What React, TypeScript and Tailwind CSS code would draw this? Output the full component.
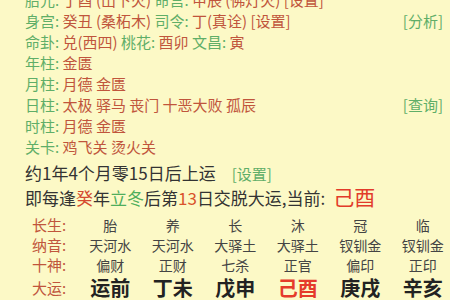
const font = { fontFamily: '"Noto Sans CJK SC", "Noto Sans", sans-serif' };

const G = "text-[#5fae68]";
const R = "text-[#c0553c]";

type Seg = [string, string];

const infoLines: { segs: Seg[]; right?: string }[] = [
  { segs: [["胎元: ", G], ["丁酉 (山下火) ", R], ["命宫: ", G], ["甲辰 (佛灯火) [设置]", R]] },
  { segs: [["身宫: ", G], ["癸丑 (桑柘木) ", R], ["司令: ", G], ["丁(真诠) [设置]", R]], right: "[分析]" },
  { segs: [["命卦: ", G], ["兑(西四) ", R], ["桃花: ", G], ["酉卯 ", R], ["文昌: ", G], ["寅", R]] },
  { segs: [["年柱: ", G], ["金匮", R]] },
  { segs: [["月柱: ", G], ["月德 金匮", R]] },
  { segs: [["日柱: ", G], ["太极 驿马 丧门 十恶大败 孤辰", R]], right: "[查询]" },
  { segs: [["时柱: ", G], ["月德 金匮", R]] },
  { segs: [["关卡: ", G], ["鸡飞关 烫火关", R]] },
];

const rows = [
  { label: "长生", cells: ["胎", "养", "长", "沐", "冠", "临"] },
  { label: "纳音", cells: ["天河水", "天河水", "大驿土", "大驿土", "钗钏金", "钗钏金"] },
  { label: "十神", cells: ["偏财", "正财", "七杀", "正官", "偏印", "正印"] },
];

const dayun = ["运前", "丁未", "戊申", "己酉", "庚戌", "辛亥"];

export default function App() {
  return (
    <div className="w-[450px] h-[300px] overflow-hidden bg-[#fcf9c6]" style={font}>
      {/* info lines */}
      <div className="-mt-[11px] pl-[25px] pr-[7px] text-[15px] leading-[21px]">
        {infoLines.map((line, i) => (
          <div key={i} className="flex justify-between whitespace-pre">
            <span>
              {line.segs.map(([t, c], j) => (
                <span key={j} className={c}>{t}</span>
              ))}
            </span>
            {line.right && <span className={G}>{line.right}</span>}
          </div>
        ))}
      </div>

      {/* luck start */}
      <div className="mt-[4px] pl-[25px] text-[17px] leading-[23px] text-[#333] whitespace-pre">
        <div className="flex items-baseline">
          <span>约1年4个月零15日后上运</span>
          <span className={`ml-[16px] text-[15px] ${G}`}>[设置]</span>
        </div>
        <div className="flex items-baseline">
          <span>即每逢</span>
          <span className="text-[#d4492f]">癸</span>
          <span>年</span>
          <span className="text-[#4fae5c]">立冬</span>
          <span>后第</span>
          <span className="text-[#d9532c]">13</span>
          <span>日交脱大运,当前: </span>
          <span className="ml-[4px] text-[21px] text-[#e23b2a]">己酉</span>
        </div>
      </div>

      {/* table */}
      <div className="mt-[6px] pl-[32px] grid grid-cols-[47px_repeat(6,62.5px)]">
        {rows.map((r) => (
          <div key={r.label} className="contents">
            <div className={`text-[15px] leading-[20px] ${R}`}>{r.label}:</div>
            {r.cells.map((c, k) => (
              <div key={k} className="text-center text-[14px] leading-[20px] text-[#444]">{c}</div>
            ))}
          </div>
        ))}
        <div className={`text-[15px] leading-[26px] ${R}`}>大运:</div>
        {dayun.map((c, k) => (
          <div
            key={k}
            className={`text-center text-[20px] leading-[26px] font-semibold ${c === "己酉" ? "text-[#e53b2b]" : "text-[#222]"}`}
          >
            {c}
          </div>
        ))}
      </div>
    </div>
  );
}
